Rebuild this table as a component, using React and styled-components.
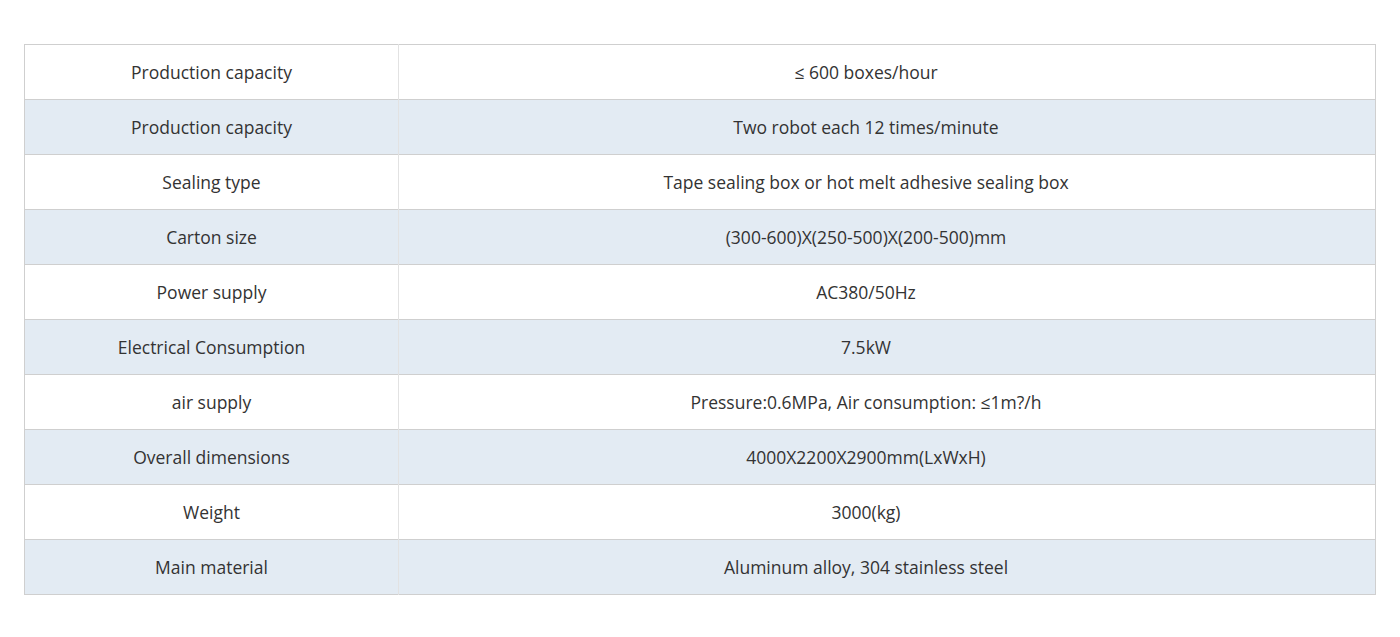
import React from 'react';
import styled, { createGlobalStyle } from 'styled-components';

const GlobalStyle = createGlobalStyle`
  body {
    margin: 0;
    background: #fff;
    font-family: "Open Sans", "Noto Sans", sans-serif;
  }
`;

const Page = styled.div`
  padding: 44px 24px 0;
`;

const SpecTable = styled.table`
  width: 100%;
  border-collapse: collapse;
  border: 1px solid #cfcfcf;
  font-size: 17.5px;
  color: #333;
`;

const Row = styled.tr`
  height: 55px;
  background: ${(p) => (p.$striped ? '#e3ebf3' : '#fff')};
  & + & {
    border-top: 1px solid #cfcfcf;
  }
`;

const LabelCell = styled.td`
  width: 373px;
  padding: 0;
  text-align: center;
  border-right: 1px solid #e2e2e2;
`;

const ValueCell = styled.td`
  padding: 0 42px 0 0;
  text-align: center;
`;

const specs = [
  ['Production capacity', '≤ 600 boxes/hour'],
  ['Production capacity', 'Two robot each 12 times/minute'],
  ['Sealing type', 'Tape sealing box or hot melt adhesive sealing box'],
  ['Carton size', '(300-600)X(250-500)X(200-500)mm'],
  ['Power supply', 'AC380/50Hz'],
  ['Electrical Consumption', '7.5kW'],
  ['air supply', 'Pressure:0.6MPa, Air consumption: ≤1m?/h'],
  ['Overall dimensions', '4000X2200X2900mm(LxWxH)'],
  ['Weight', '3000(kg)'],
  ['Main material', 'Aluminum alloy, 304 stainless steel'],
];

const App = () => (
  <Page>
    <GlobalStyle />
    <SpecTable>
      <tbody>
        {specs.map(([label, value], i) => (
          <Row key={i} $striped={i % 2 === 1}>
            <LabelCell>{label}</LabelCell>
            <ValueCell>{value}</ValueCell>
          </Row>
        ))}
      </tbody>
    </SpecTable>
  </Page>
);

export default App;
